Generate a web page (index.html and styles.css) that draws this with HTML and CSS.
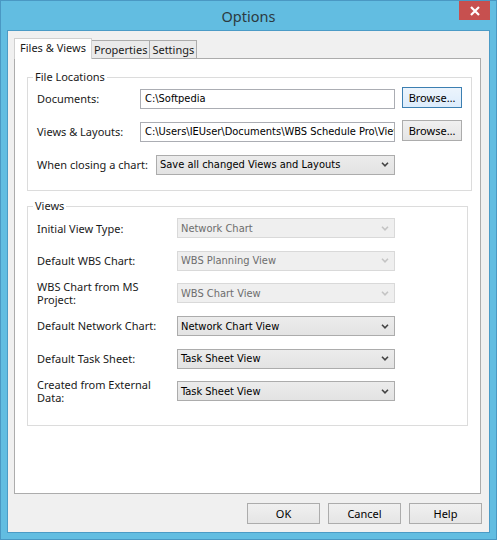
FILE: index.html
```html
<!DOCTYPE html>
<html lang="en">
<head>
    <meta charset="UTF-8">
    <title>Options</title>
    <link rel="stylesheet" href="styles.css">
</head>
<body>
    <div class="window">
        <div class="titlebar">
            <span></span>
            <span class="title">Options</span>
            <button class="close" title="Close">
                <svg width="10" height="10" viewBox="0 0 10 10"><path d="M1 1 L9 9 M9 1 L1 9" stroke="#fff" stroke-width="2.2"/></svg>
            </button>
        </div>

        <div class="client">
            <div class="tabs">
                <div class="tab active">Files &amp; Views</div>
                <div class="tab">Properties</div>
                <div class="tab">Settings</div>
            </div>

            <div class="panel">
                <fieldset class="group">
                    <legend>File Locations</legend>
                    <div class="rows">
                        <div class="row">
                            <label class="lbl lbl-path">Documents:</label>
                            <div class="field">C:\Softpedia</div>
                            <button class="btn browse focused">Browse…</button>
                        </div>
                        <div class="row">
                            <label class="lbl lbl-path">Views &amp; Layouts:</label>
                            <div class="field">C:\Users\IEUser\Documents\WBS Schedule Pro\Views</div>
                            <button class="btn browse">Browse…</button>
                        </div>
                        <div class="row">
                            <label class="lbl lbl-close">When closing a chart:</label>
                            <div class="combo wide">
                                <span>Save all changed Views and Layouts</span>
                                <svg width="8" height="5" viewBox="0 0 8 5"><polyline points="1,0.8 4,3.8 7,0.8" fill="none" stroke="#444" stroke-width="1.6"/></svg>
                            </div>
                        </div>
                    </div>
                </fieldset>

                <fieldset class="group views">
                    <legend>Views</legend>
                    <div class="rows">
                        <div class="row">
                            <label class="lbl lbl-view">Initial View Type:</label>
                            <div class="combo disabled">
                                <span>Network Chart</span>
                                <svg width="8" height="5" viewBox="0 0 8 5"><polyline points="1,0.8 4,3.8 7,0.8" fill="none" stroke="#c4c4c4" stroke-width="1.6"/></svg>
                            </div>
                        </div>
                        <div class="row">
                            <label class="lbl lbl-view">Default WBS Chart:</label>
                            <div class="combo disabled">
                                <span>WBS Planning View</span>
                                <svg width="8" height="5" viewBox="0 0 8 5"><polyline points="1,0.8 4,3.8 7,0.8" fill="none" stroke="#c4c4c4" stroke-width="1.6"/></svg>
                            </div>
                        </div>
                        <div class="row">
                            <label class="lbl lbl-view">WBS Chart from MS Project:</label>
                            <div class="combo disabled">
                                <span>WBS Chart View</span>
                                <svg width="8" height="5" viewBox="0 0 8 5"><polyline points="1,0.8 4,3.8 7,0.8" fill="none" stroke="#c4c4c4" stroke-width="1.6"/></svg>
                            </div>
                        </div>
                        <div class="row">
                            <label class="lbl lbl-view">Default Network Chart:</label>
                            <div class="combo">
                                <span>Network Chart View</span>
                                <svg width="8" height="5" viewBox="0 0 8 5"><polyline points="1,0.8 4,3.8 7,0.8" fill="none" stroke="#444" stroke-width="1.6"/></svg>
                            </div>
                        </div>
                        <div class="row">
                            <label class="lbl lbl-view">Default Task Sheet:</label>
                            <div class="combo">
                                <span>Task Sheet View</span>
                                <svg width="8" height="5" viewBox="0 0 8 5"><polyline points="1,0.8 4,3.8 7,0.8" fill="none" stroke="#444" stroke-width="1.6"/></svg>
                            </div>
                        </div>
                        <div class="row">
                            <label class="lbl lbl-view">Created from External Data:</label>
                            <div class="combo">
                                <span>Task Sheet View</span>
                                <svg width="8" height="5" viewBox="0 0 8 5"><polyline points="1,0.8 4,3.8 7,0.8" fill="none" stroke="#444" stroke-width="1.6"/></svg>
                            </div>
                        </div>
                    </div>
                </fieldset>
            </div>

            <div class="buttons">
                <button class="btn action">OK</button>
                <button class="btn action">Cancel</button>
                <button class="btn action">Help</button>
            </div>
        </div>
    </div>
</body>
</html>
```

FILE: styles.css
```css
body {
    margin: 0;
    font-family: "Noto Sans", sans-serif;
    font-size: 11px;
    color: #1a1a1a;
}
.window {
    width: 497px;
    height: 540px;
    box-sizing: border-box;
    border: 1px solid #4a98c3;
    background-color: #62bde1;
    padding: 0 6px 6px;
}
.titlebar {
    height: 29px;
    display: grid;
    grid-template-columns: 1fr auto 1fr;
    align-items: center;
}
.title {
    font-size: 14.5px;
    color: #2c3a40;
    padding-top: 1px;
}
.close {
    justify-self: end;
    align-self: start;
    width: 31px;
    height: 19px;
    border: none;
    padding: 0;
    background-color: #c7504f;
    display: flex;
    align-items: center;
    justify-content: center;
}
.client {
    height: 503px;
    box-sizing: border-box;
    border: 1px solid #4b9bc6;
    background-color: #f0f0f0;
    padding: 7px 8px 0 6px;
}
.tabs {
    display: flex;
    align-items: flex-end;
    height: 21px;
    margin-bottom: -1px;
}
.tab {
    box-sizing: border-box;
    height: 18px;
    margin-bottom: 1px;
    padding: 0 2px;
    border: 1px solid #acacac;
    border-bottom: none;
    background-color: #eaeaea;
    line-height: 17px;
    white-space: nowrap;
}
.tab + .tab {
    margin-left: -1px;
}
.tab.active {
    position: relative;
    z-index: 1;
    height: 21px;
    margin-bottom: 0;
    padding: 0 5px;
    background-color: #fff;
    border-color: #d0d0d0;
    line-height: 18px;
}
.panel {
    height: 436px;
    box-sizing: border-box;
    border: 1px solid #acacac;
    background-color: #fff;
    padding: 11px 12px;
}
.group {
    margin: 0;
    border: 1px solid #dcdcdc;
    padding: 0 9px 9px;
}
.group legend {
    margin-left: -4px;
    padding: 0 2px;
    line-height: 14px;
}
.group.views {
    margin-top: 8px;
    padding-bottom: 17px;
}
.rows {
    display: grid;
    grid-auto-rows: 33px;
    margin-top: -2px;
}
.views .rows {
    grid-auto-rows: 32.6px;
    margin-top: -1px;
}
.row {
    display: flex;
    align-items: center;
}
.lbl {
    flex: none;
    line-height: 13.5px;
}
.lbl-path {
    width: 103px;
}
.lbl-close {
    width: 119px;
}
.lbl-view {
    width: 124px;
    margin-right: 16px;
}
.field, .combo {
    box-sizing: border-box;
    height: 20px;
    font-family: "DejaVu Sans Condensed", "Liberation Sans", sans-serif;
    font-size: 11px;
    white-space: nowrap;
    overflow: hidden;
}
.field {
    width: 255px;
    border: 1px solid #abadb3;
    padding: 0 4px;
    line-height: 18px;
    color: #000;
}
.combo {
    width: 218px;
    display: flex;
    align-items: center;
    border: 1px solid #acacac;
    background: linear-gradient(#ececec, #e3e3e3);
    padding: 0 5px 0 3px;
    color: #000;
}
.combo span {
    flex: 1;
}
.combo.wide {
    width: 239px;
}
.combo.disabled {
    border-color: #d9d9d9;
    background: #efefef;
    color: #6d6d6d;
}
.btn {
    box-sizing: border-box;
    height: 21px;
    border: 1px solid #acacac;
    background: linear-gradient(#f0f0f0, #e5e5e5);
    font-family: "Noto Sans", sans-serif;
    font-size: 11px;
    color: #000;
    padding: 0;
}
.browse {
    width: 60px;
    margin-left: 7px;
    margin-top: -3px;
}
.browse.focused {
    border-color: #3c7fb1;
    background: linear-gradient(#ecf4fc, #dcecfc);
}
.buttons {
    display: flex;
    justify-content: flex-end;
    gap: 8px;
    margin-top: 9px;
    margin-right: -1px;
}
.action {
    width: 73px;
}
```
